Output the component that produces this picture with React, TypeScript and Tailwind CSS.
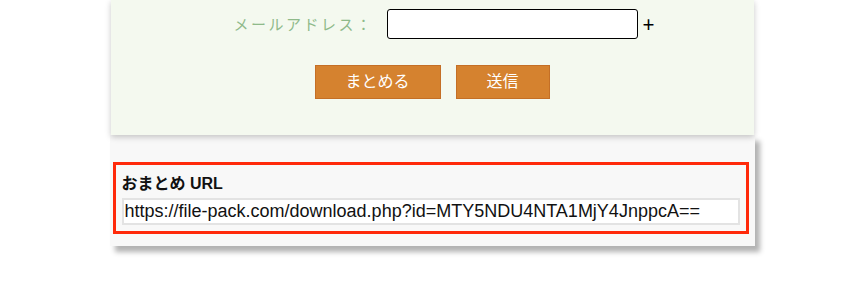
import React from 'react';

const jp = "font-['Liberation_Sans','Noto_Sans_CJK_JP',sans-serif]";

const FormPanel = () => (
  <div className="relative z-10 w-[643px] mx-auto h-[135px] bg-[#f4f9ef] shadow-[0_2px_6px_rgba(0,0,0,0.22)] flex flex-col">
    <div className="flex items-center h-[30px] mt-[9px] pl-[123px]">
      <span className="text-[15px] tracking-[2.5px] text-[#8fba8a] w-[153px] leading-none">
        メールアドレス：
      </span>
      <input
        type="text"
        className="w-[251px] h-[30px] bg-white border border-black rounded-[3px] outline-none"
      />
      <span className="ml-[5px] text-[21px] font-normal font-['Noto_Sans',sans-serif] leading-none text-black">
        +
      </span>
    </div>
    <div className="flex justify-center gap-[15px] mt-[26px]">
      <button className="w-[126px] h-[34px] bg-[#d5822f] border border-[#c46f26] text-white text-[16px] leading-none">
        まとめる
      </button>
      <button className="w-[94px] h-[34px] bg-[#d5822f] border border-[#c46f26] text-white text-[16px] leading-none">
        送信
      </button>
    </div>
  </div>
);

const UrlPanel = () => (
  <div className="w-[645px] mx-auto h-[111px] bg-[#f8f8f8] shadow-[5px_6px_5px_rgba(0,0,0,0.3)] pt-[27px] pl-[3px] pr-[6px]">
    <div className="border-[3px] border-[#ff2a0a] h-[72px] px-[6px] pt-[8px]">
      <div className="text-[16px] font-bold text-[#111] leading-[21px]">おまとめ URL</div>
      <input
        type="text"
        readOnly
        value="https://file-pack.com/download.php?id=MTY5NDU4NTA1MjY4JnppcA=="
        className="mt-[4px] w-full h-[27px] bg-white border-2 border-[#e3e3e3] px-[1px] text-[18px] text-[#111] outline-none"
      />
    </div>
  </div>
);

export default function App() {
  return (
    <div className={`w-[864px] h-[290px] bg-white ${jp}`}>
      <FormPanel />
      <UrlPanel />
    </div>
  );
}
